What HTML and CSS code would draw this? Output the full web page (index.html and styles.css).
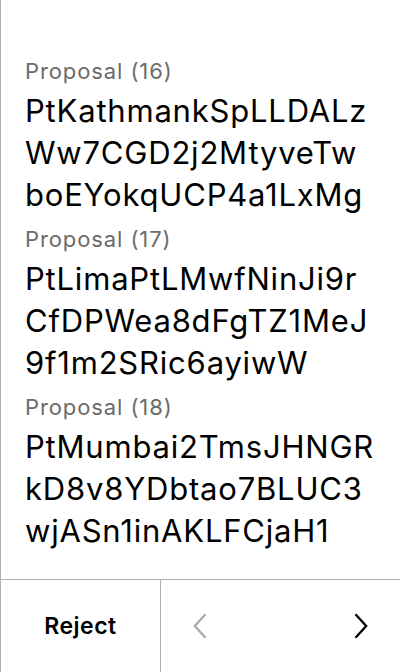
FILE: index.html
```html
<!DOCTYPE html>
<html lang="en">
<head>
<meta charset="utf-8">
<link rel="stylesheet" href="styles.css">
</head>
<body>
<div class="screen">
  <div class="list">
    <div class="item">
      <div class="label">Proposal (16)</div>
      <div class="hash">PtKathmankSpLLDALz Ww7CGD2j2MtyveTw boEYokqUCP4a1LxMg</div>
    </div>
    <div class="item">
      <div class="label">Proposal (17)</div>
      <div class="hash">PtLimaPtLMwfNinJi9r CfDPWea8dFgTZ1MeJ 9f1m2SRic6ayiwW</div>
    </div>
    <div class="item">
      <div class="label">Proposal (18)</div>
      <div class="hash">PtMumbai2TmsJHNGR kD8v8YDbtao7BLUC3 wjASn1inAKLFCjaH1</div>
    </div>
  </div>
  <div class="footer">
    <div class="reject">Reject</div>
    <div class="nav">
      <svg class="chev disabled" width="14" height="26" viewBox="0 0 14 26"><path d="M12.5 1.2 L1.8 13 L12.5 24.8" fill="none" stroke="currentColor" stroke-width="2.3"/></svg>
      <svg class="chev" width="14" height="26" viewBox="0 0 14 26"><path d="M1.5 1.2 L12.2 13 L1.5 24.8" fill="none" stroke="currentColor" stroke-width="2.3"/></svg>
    </div>
  </div>
</div>
</body>
</html>
```
FILE: styles.css
```css
html, body {
  margin: 0;
  padding: 0;
  background: #fff;
}
body {
  font-family: Inter, "Noto Sans", sans-serif;
  color: #000;
}
.screen {
  width: 400px;
  height: 672px;
  box-sizing: border-box;
  border-left: 1px solid #b0b0b0;
  display: flex;
  flex-direction: column;
}
.list {
  flex: 1;
  padding: 57px 0 0 24px;
  display: flex;
  flex-direction: column;
  gap: 9px;
}
.label {
  font-size: 22px;
  line-height: 28px;
  letter-spacing: 0.9px;
  color: #6b6b6b;
}
.hash {
  margin-top: 5px;
  font-size: 31px;
  line-height: 42px;
  letter-spacing: 0.8px;
  width: 370px;
}
.footer {
  height: 92px;
  border-top: 1px solid #b0b0b0;
  display: flex;
}
.reject {
  width: 159px;
  border-right: 1px solid #b0b0b0;
  display: flex;
  align-items: center;
  justify-content: center;
  font-size: 23px;
  font-weight: 600;
  letter-spacing: 0.5px;
}
.nav {
  flex: 1;
  display: flex;
  align-items: center;
  justify-content: space-between;
  padding: 0 32px 0 32px;
}
.chev {
  color: #000;
}
.chev.disabled {
  color: #aaaaaa;
}
```
